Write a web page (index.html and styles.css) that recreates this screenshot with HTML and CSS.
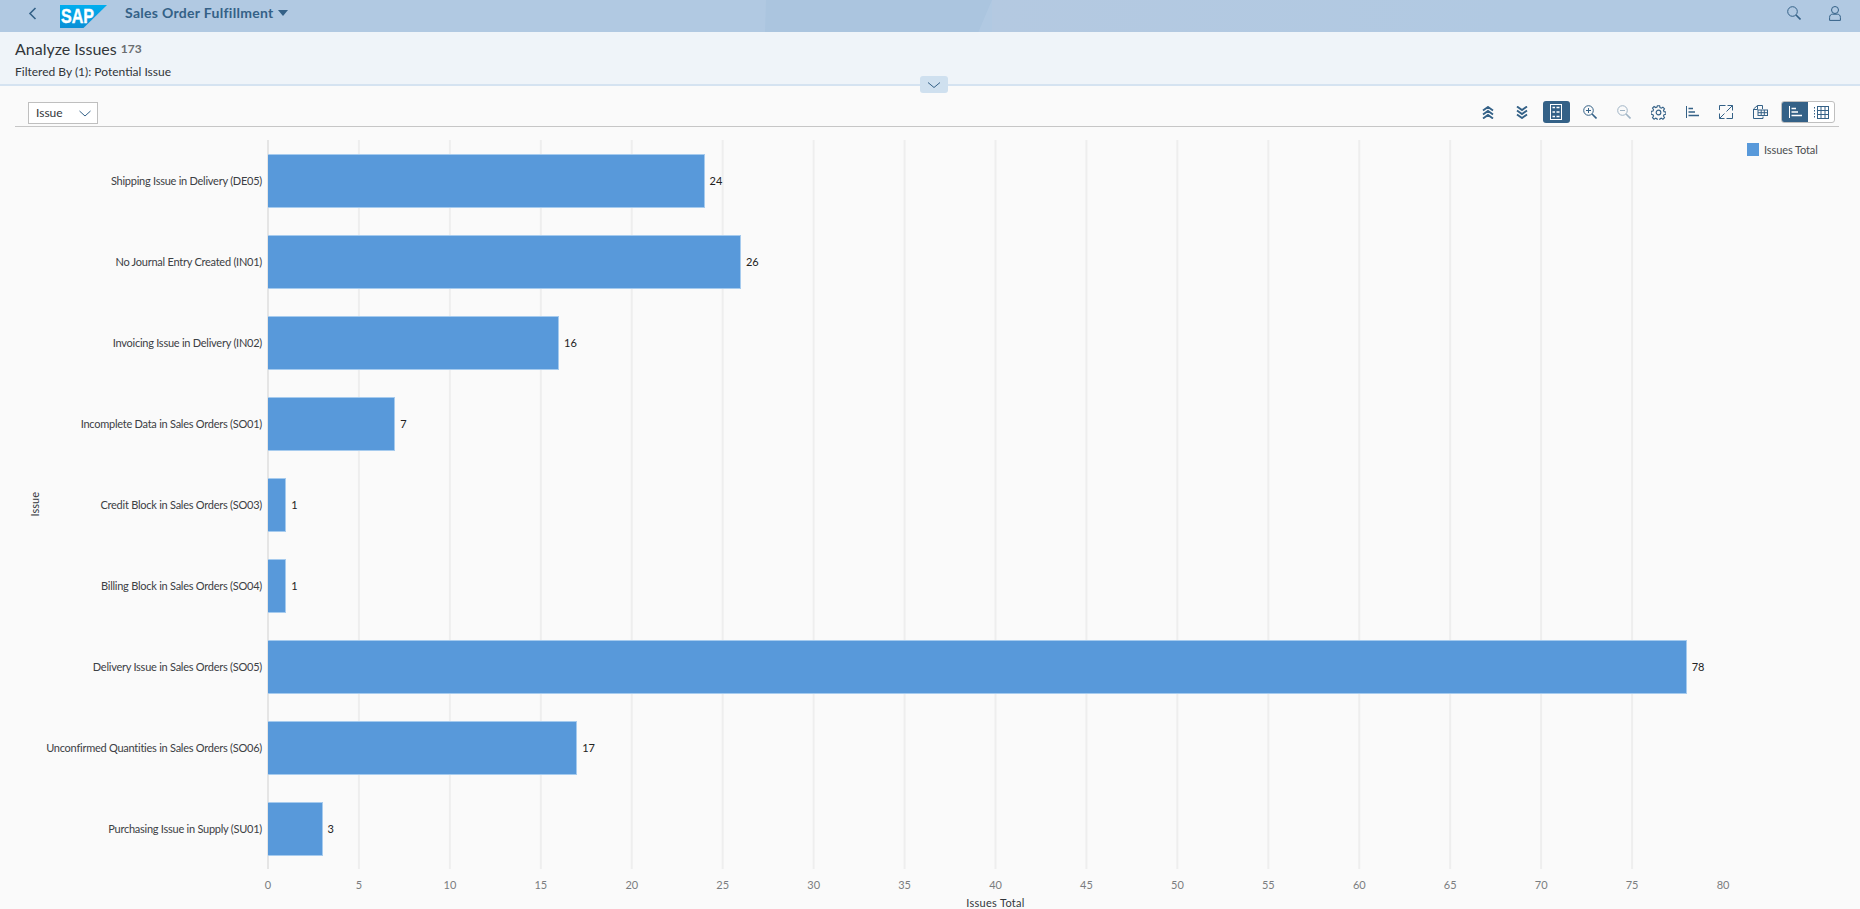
FILE: index.html
```html
<!DOCTYPE html>
<html lang="en">
<head>
<meta charset="utf-8">
<title>Analyze Issues</title>
<link rel="stylesheet" href="styles.css">
</head>
<body>
<header class="shell">
  <div class="shell-left">
    <button class="shell-back" aria-label="Back">
      <svg width="10" height="13" viewBox="0 0 10 13"><path d="M7.500 1 2 6.500 7.500 12" class="ln2"/></svg>
    </button>
    <svg class="logo" width="47" height="23" viewBox="0 0 47 23">
      <defs><linearGradient id="sapg" x1="0" y1="0" x2="0" y2="1"><stop offset="0" stop-color="#00aeef"/><stop offset="1" stop-color="#0a8fd6"/></linearGradient></defs>
      <polygon points="0,0 47,0 23.500,23 0,23" fill="url(#sapg)"/>
      <text x="1" y="18" class="logo-text" textLength="33" lengthAdjust="spacingAndGlyphs">SAP</text>
    </svg>
    <span class="app-title">Sales Order Fulfillment</span>
    <span class="caret"></span>
  </div>
  <div class="shell-right">
    <svg width="14" height="14" viewBox="0 0 14 14"><circle cx="5.500" cy="5.500" r="4.800" class="ln"/><path d="m9 9 4.500 4.500" class="ln2"/></svg>
    <svg width="12" height="15" viewBox="0 0 12 15"><circle cx="6" cy="4" r="3.500" class="ln"/><path d="M.6 14.400v-3c0-2 1.200-3.200 3-3.200h4.800c1.800 0 3 1.200 3 3.200v3z" class="ln"/></svg>
  </div>
</header>

<section class="subheader">
  <div class="title-row"><h1>Analyze Issues</h1><span class="count">173</span></div>
  <div class="filter-row">Filtered By (1): Potential Issue</div>
  <button class="collapse" aria-label="Collapse">
    <svg width="14" height="8" viewBox="0 0 14 8"><path d="M1 1.500 7 6.500l6-5" class="ln"/></svg>
  </button>
</section>

<main class="content">
  <div class="toolbar">
    <div class="select"><span>Issue</span>
      <svg width="12" height="7" viewBox="0 0 12 7"><path d="M.5 1 6 6l5.500-5" class="ln"/></svg>
    </div>
    <div class="tools">
      <span class="tool"><svg width="12" height="13" viewBox="0 0 12 13"><path d="M1 4.500 6 1l5 3.500M1 8.500 6 5l5 3.500M1 12.500 6 9l5 3.500" class="ln3"/></svg></span>
      <span class="tool"><svg width="12" height="13" viewBox="0 0 12 13"><path d="M1 .5 6 4l5-3.500M1 4.500 6 8l5-3.500M1 8.500 6 12l5-3.500" class="ln3"/></svg></span>
      <span class="tool"><span class="tool-on"><svg width="12" height="16" viewBox="0 0 12 16"><rect x=".5" y=".5" width="11" height="15" class="ln-w"/><path d="M2.500 3.500h2.500M6.500 3.500h3M2.500 8h2.500M6.500 8h3M2.500 12.500h2.500M6.500 12.500h3" class="ln-w2"/></svg></span></span>
      <span class="tool"><svg width="14" height="14" viewBox="0 0 14 14"><circle cx="5.500" cy="5.500" r="4.800" class="ln"/><path d="M3 5.500h5M5.500 3v5" class="ln"/><path d="m9 9 4.500 4.500" class="ln2"/></svg></span>
      <span class="tool dim"><svg width="14" height="14" viewBox="0 0 14 14"><circle cx="5.500" cy="5.500" r="4.800" class="ln"/><path d="M3 5.500h5" class="ln"/><path d="m9 9 4.500 4.500" class="ln2"/></svg></span>
      <span class="tool"><svg width="15" height="15" viewBox="0 0 16 16"><circle cx="8" cy="8" r="2.500" class="ln-g"/><path d="M6.800.8h2.400l.4 2 1.400.6 1.700-1.100 1.700 1.700-1.100 1.700.6 1.400 2 .4v2.400l-2 .4-.6 1.400 1.100 1.700-1.700 1.700-1.700-1.100-1.400.6-.4 2H6.800l-.4-2-1.400-.6-1.700 1.100-1.700-1.700 1.100-1.700-.6-1.400-2-.4V6.800l2-.4.6-1.400-1.100-1.700 1.700-1.700 1.700 1.100 1.400-.6z" class="ln-g"/></svg></span>
      <span class="tool"><svg width="13" height="12" viewBox="0 0 13 12"><path d="M.5 0v12" class="ln"/><path d="M2.500 2.500h4.500M2.500 6H9M2.500 9.500H13" class="ln2"/></svg></span>
      <span class="tool"><svg width="14" height="14" viewBox="0 0 14 14"><path d="M.5 5V.5h6M13.500 8v5.500h-6M8.500.5h5v5M13.500.5l-6 6M.5 8.500v5h5M.5 13.500l5-5" class="ln"/></svg></span>
      <span class="tool"><svg width="15" height="14" viewBox="0 0 15 14"><path d="M4.500.5h5v3.500M4.500.5.500 4v9.500h9.500V11.500M.5 4.500h4v-4" class="ln"/><rect x="5" y="5" width="9.500" height="5.500" class="ln"/><path d="M8.200 5v5.500M11.300 5v5.500M5 7.700h9.500" class="ln"/></svg></span>
      <div class="segmented">
        <span class="seg seg-on"><svg width="13" height="12" viewBox="0 0 13 12"><path d="M.5 0v12" class="ln-w"/><path d="M2.500 2.500h4.500M2.500 6H9M2.500 9.500H13" class="ln-w2"/></svg></span>
        <span class="seg"><svg width="15" height="13" viewBox="0 0 15 13"><rect x="3.500" y=".5" width="11" height="12" class="ln"/><path d="M7 .5v12M11 .5v12M3.500 4.500h11M3.500 8.500h11" class="ln"/><path d="M.5 1v11" class="ln-d"/></svg></span>
      </div>
    </div>
  </div>

  <div class="chart">
    <div class="y-title"><span>Issue</span></div>
    <div class="y-labels">
      <div>Shipping Issue in Delivery (DE05)</div>
      <div>No Journal Entry Created (IN01)</div>
      <div>Invoicing Issue in Delivery (IN02)</div>
      <div>Incomplete Data in Sales Orders (SO01)</div>
      <div>Credit Block in Sales Orders (SO03)</div>
      <div>Billing Block in Sales Orders (SO04)</div>
      <div>Delivery Issue in Sales Orders (SO05)</div>
      <div>Unconfirmed Quantities in Sales Orders (SO06)</div>
      <div>Purchasing Issue in Supply (SU01)</div>
    </div>
    <div class="plot-col">
      <div class="plot">
        <div class="row"><div class="bar" style="width:30%"></div><span class="val">24</span></div>
        <div class="row"><div class="bar" style="width:32.5%"></div><span class="val">26</span></div>
        <div class="row"><div class="bar" style="width:20%"></div><span class="val">16</span></div>
        <div class="row"><div class="bar" style="width:8.75%"></div><span class="val">7</span></div>
        <div class="row"><div class="bar" style="width:1.25%"></div><span class="val">1</span></div>
        <div class="row"><div class="bar" style="width:1.25%"></div><span class="val">1</span></div>
        <div class="row"><div class="bar" style="width:97.5%"></div><span class="val">78</span></div>
        <div class="row"><div class="bar" style="width:21.25%"></div><span class="val">17</span></div>
        <div class="row"><div class="bar" style="width:3.75%"></div><span class="val">3</span></div>
      </div>
      <div class="ticks">
        <span>0</span><span>5</span><span>10</span><span>15</span><span>20</span><span>25</span><span>30</span><span>35</span><span>40</span><span>45</span><span>50</span><span>55</span><span>60</span><span>65</span><span>70</span><span>75</span><span>80</span>
      </div>
      <div class="x-title">Issues Total</div>
    </div>
    <div class="legend"><i class="swatch"></i><span>Issues Total</span></div>
  </div>
</main>
</body>
</html>
```

FILE: styles.css
```css
* { box-sizing: border-box; }
html, body { margin: 0; height: 100%; overflow: hidden; }
body { width: 1860px; height: 909px; background: #fafafa; font-family: Lato, "Liberation Sans", Arial, sans-serif; color: #32363a; display: flex; flex-direction: column; }
svg { display: block; }
button { border: 0; padding: 0; background: none; font: inherit; }
.ln { fill: none; stroke: #346187; stroke-width: 1; }
.ln2 { fill: none; stroke: #346187; stroke-width: 1.600; }
.ln3 { fill: none; stroke: #346187; stroke-width: 1.900; }
.ln-g { fill: none; stroke: #346187; stroke-width: 1.200; }
.ln-d { fill: none; stroke: #346187; stroke-width: 1; stroke-dasharray: 1.500 1.500; }
.ln-w { fill: none; stroke: #fff; stroke-width: 1; }
.ln-w2 { fill: none; stroke: #fff; stroke-width: 1.600; }

.shell { position: relative; height: 32px; flex: none; background: #b1c9e2; display: flex; justify-content: space-between; align-items: center; padding: 0 19px 6px 28px; overflow: hidden; }
.shell::before { content: ""; position: absolute; left: 765px; top: 0; width: 227px; height: 32px; background: #abc5df; clip-path: polygon(1px 0, 100% 0, 94% 100%, 0 100%); }
.shell::after { content: ""; position: absolute; left: 992px; top: 0; right: 0; height: 32px; background: linear-gradient(90deg, #b4c9e1, #b1c9e2 60%); }
.shell-left, .shell-right { position: relative; z-index: 1; display: flex; align-items: center; }
.shell-right { gap: 28px; }
.shell-back { width: 10px; height: 13px; margin-right: 22px; }
.logo { margin-right: 18px; margin-top: 6px; }
.logo-text { font: bold 20px "Liberation Sans", Arial, sans-serif; fill: #fff; stroke: #fff; stroke-width: .4; }
.app-title { font-size: 14px; font-weight: 700; color: #346187; line-height: 16px; letter-spacing: .3px; }
.caret { width: 0; height: 0; border-left: 5px solid transparent; border-right: 5px solid transparent; border-top: 6px solid #346187; margin: 0 0 0 4px; }

.subheader { position: relative; height: 54px; flex: none; background: #eff4f9; border-bottom: 2px solid #d5e3f1; padding: 7px 15px 0; }
.title-row { display: flex; align-items: center; gap: 4px; height: 18px; }
.title-row h1 { margin: 0; font-size: 16px; font-weight: 400; color: #32363a; }
.count { font-size: 12px; font-weight: 700; color: #6a6d70; }
.filter-row { margin-top: 8px; font-size: 12px; line-height: 14px; color: #32363a; }
.collapse { position: absolute; left: 920px; top: 44px; width: 28px; height: 17px; background: #cfe0ef; border-radius: 3px; display: flex; align-items: center; justify-content: center; }

.content { flex: 1; min-height: 0; padding: 0 21px 0 15px; display: flex; flex-direction: column; }
.toolbar { height: 41px; flex: none; border-bottom: 1px solid #c6c6c6; display: flex; justify-content: space-between; align-items: flex-start; padding: 15px 4px 0 13px; }
.select { width: 70px; height: 22px; margin-top: 1px; background: #fff; border: 1px solid #bfbfbf; display: flex; align-items: center; justify-content: space-between; padding: 0 6px 0 7px; font-size: 12px; color: #32363a; }
.select span { margin-top: -2px; }
.tools { display: flex; align-items: center; height: 22px; }
.tool { width: 34px; height: 22px; display: flex; align-items: center; justify-content: center; }
.tool.dim { opacity: .45; }
.tool-on { width: 27px; height: 22px; background: #346187; border-radius: 3px; display: flex; align-items: center; justify-content: center; }
.segmented { display: flex; width: 54px; height: 22px; margin-left: 4px; background: #fff; border: 1px solid #bfbfbf; border-radius: 3px; overflow: hidden; }
.seg { flex: 1; display: flex; align-items: center; justify-content: center; }
.seg-on { background: #346187; }

.chart { flex: 1; min-height: 0; display: flex; padding-top: 13px; }
.y-title { width: 30px; height: 729px; flex: none; padding-left: 9px; display: flex; align-items: center; justify-content: center; font-size: 11px; color: #32363a; }
.y-title span { writing-mode: vertical-rl; transform: rotate(180deg); }
.y-labels { width: 217px; height: 729px; flex: none; display: grid; grid-template-columns: 217px; grid-template-rows: repeat(9, 81px); font-size: 11px; letter-spacing: -.25px; color: #3c4044; text-align: right; white-space: nowrap; }
.y-labels div { align-self: center; margin-top: -1px; }
.plot-col { width: 1456px; flex: none; }
.plot { width: 1455px; height: 729px; margin-left: 5px; display: grid; grid-template-rows: repeat(9, 81px);
  background-image: linear-gradient(to right, #e5e5e5 2px, transparent 2px), linear-gradient(to right, #eee 2px, transparent 2px);
  background-size: 100% 100%, 90.940px 100%; background-repeat: no-repeat, repeat-x; }
.row { display: flex; align-items: center; }
.bar { height: 54px; margin-left: 1px; background: #5899da; border: 1px solid #a6cbee; border-left: 0; }
.val { margin-left: 5px; font-size: 11px; color: #222; margin-top: -1px; }
.ticks { width: 1455px; margin-left: 6px; height: 15px; margin-top: 8px; display: flex; justify-content: space-between; font-size: 11px; line-height: 15px; color: #7a7d80; }
.ticks span { width: 0; display: flex; justify-content: center; white-space: nowrap; }
.x-title { margin: 4px 0 0 6px; width: 1455px; text-align: center; font-size: 11px; letter-spacing: .3px; line-height: 13px; color: #32363a; }
.legend { display: flex; align-items: center; gap: 5px; height: 14px; margin: 2px 0 0 29px; font-size: 11px; letter-spacing: -.1px; white-space: nowrap; color: #4a4d50; }
.swatch { width: 12px; height: 13px; background: #5899da; }
```
